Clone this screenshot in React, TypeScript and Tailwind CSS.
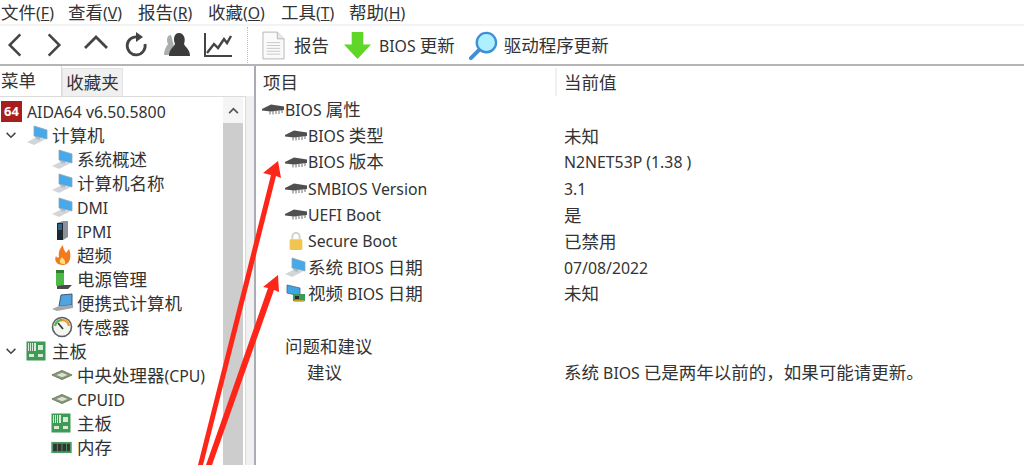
import type { ReactNode } from 'react';

// CJK glyphs run wider than the latin ones in the shot, so they get their own size.
// The wrapper's own font is the CJK one so latin-only rows keep the same baseline.
function T({ children }: { children: string }) {
  return (
    <span className="inline-block font-['Noto_Sans_CJK_SC',sans-serif] text-[17.5px]">
      {children.split(/([\u2E80-\uFFEF]+)/).map((part, i) =>
        i % 2 === 1 ? (
          <span key={i}>{part}</span>
        ) : part ? (
          <span key={i} className="font-['Noto_Sans',sans-serif] text-[15.8px] whitespace-pre">{part}</span>
        ) : null
      )}
    </span>
  );
}

function Chip() {
  return (
    <svg viewBox="0 0 22 14" className="w-[22px] h-[14px]">
      <path d="M0 7 L9 2.5 L22 4.5 L22 8 L9 9.5 L0 8.5 Z" fill="#4f4f4f" />
      <path d="M8 9 v3.5 M11 9 v3.5 M14 8.5 v3.5 M17 8.5 v3.5 M20 8 v3" stroke="#7d7d7d" strokeWidth="1.1" />
    </svg>
  );
}

function Monitor() {
  return (
    <svg viewBox="0 0 24 22" className="w-[24px] h-[22px]">
      <path d="M1 18 L11 13 L19 15.5 L8 21 Z" fill="#d3d6d8" />
      <path d="M9 12 L14 13.5 V16 L10 15 Z" fill="#b4bdc3" />
      <path d="M8 2 L21 6 V15 L8 12 Z" fill="#45a9ea" stroke="#8fa6b5" strokeWidth="0.8" />
    </svg>
  );
}

function Laptop() {
  return (
    <svg viewBox="0 0 24 22" className="w-[24px] h-[22px]">
      <path d="M10 3 L21 2 V13 L8 14 Z" fill="#4ea5e2" stroke="#3f5a70" strokeWidth="1" />
      <path d="M1 17 L8 14 L22 13 L22 16 L6 19 Z" fill="#a3a8ac" />
    </svg>
  );
}

function Server() {
  return (
    <svg viewBox="0 0 24 22" className="w-[24px] h-[22px]">
      <path d="M6 3 L12 1 H17 V17 L12 20 H6 Z" fill="#8b9299" />
      <path d="M6 3 H12 V20 H6 Z" fill="#1d2730" />
      <path d="M7 5 H11 M7 7 H11 M7 9 H11" stroke="#4aa0de" strokeWidth="1" />
    </svg>
  );
}

function Flame() {
  return (
    <svg viewBox="0 0 24 22" className="w-[24px] h-[22px]">
      <path d="M12 21 C5 21 3 16 5 12 C6 14 7 14 8 13 C7 8 9 4 12 1 C12 5 14 7 15 9 C16 8 17 6 18 5 C20 10 21 20 12 21 Z" fill="#f17a1c" />
      <path d="M12 20 C8 20 8 16 11 13 C12 15 15 16 14 20 Z" fill="#ffe27a" />
    </svg>
  );
}

function Power() {
  return (
    <svg viewBox="0 0 24 22" className="w-[24px] h-[22px]">
      <rect x="5" y="2" width="8" height="16" rx="1" fill="#4cb944" />
      <rect x="5" y="2" width="8" height="3" fill="#2f7d2b" />
      <path d="M13 17 H21 L17 21 H6 V18 Z" fill="#4a4a4a" />
    </svg>
  );
}

function Gauge() {
  return (
    <svg viewBox="0 0 24 22" className="w-[24px] h-[22px]">
      <circle cx="11" cy="11" r="9.5" fill="#f6f6f0" stroke="#5b6068" strokeWidth="1.6" />
      <path d="M4 10 A7 7 0 0 1 11 4" stroke="#58b84a" strokeWidth="2.4" fill="none" />
      <path d="M11 4 A7 7 0 0 1 18 10" stroke="#f09a2a" strokeWidth="2.4" fill="none" />
      <path d="M7 7 L12 13" stroke="#333" strokeWidth="1.6" />
    </svg>
  );
}

function Board() {
  return (
    <svg viewBox="0 0 20 20" className="w-[20px] h-[20px]">
      <rect x="0.5" y="0.5" width="19" height="19" fill="#3f9a55" />
      <rect x="2" y="2" width="8" height="8" fill="#d7ead9" />
      <path d="M3.5 2 v8 M5.5 2 v8 M7.5 2 v8" stroke="#3f9a55" strokeWidth="1" />
      <rect x="12" y="4" width="5" height="5" fill="#d7ead9" />
      <rect x="3" y="13" width="5" height="3" fill="#d7ead9" />
      <rect x="12" y="13" width="5" height="3" fill="#d7ead9" />
    </svg>
  );
}

function Cpu() {
  return (
    <svg viewBox="0 0 24 14" className="w-[22px] h-[14px]">
      <path d="M1 7 L12 2 L23 7 L12 12 Z" fill="#7f9a75" stroke="#77775f" strokeWidth="1" />
      <path d="M6 7 L12 4.5 L18 7 L12 9.5 Z" fill="#dfe2d2" />
    </svg>
  );
}

function Ram() {
  return (
    <svg viewBox="0 0 22 14" className="w-[21px] h-[13px]">
      <rect x="0" y="1" width="22" height="12" fill="#4c9a63" />
      <path d="M2 3 h4 v8 h-4 Z M7 3 h4 v8 h-4 Z M12 3 h4 v8 h-4 Z M17 3 h3 v8 h-3 Z" fill="#333" />
    </svg>
  );
}

function Lock() {
  return (
    <svg viewBox="0 0 16 22" className="w-[16px] h-[20px]">
      <path d="M4 9 V6 A4 4 0 0 1 12 6 V9" fill="none" stroke="#cfcfc4" strokeWidth="2" />
      <rect x="1" y="9" width="14" height="12" rx="1.5" fill="#f0c552" />
    </svg>
  );
}

function Video() {
  return (
    <svg viewBox="0 0 20 20" className="w-[20px] h-[20px]">
      <path d="M1 2 L14 5 V13 L1 10 Z" fill="#3fa6e6" stroke="#40687f" strokeWidth="0.8" />
      <rect x="7" y="11" width="12" height="7" fill="#3b9a58" />
      <rect x="9" y="13" width="4" height="3" fill="#2a2a2a" />
      <path d="M8 18 H18" stroke="#e0a526" strokeWidth="1.6" />
    </svg>
  );
}

function TreeRow({ icon, label, top }: { icon: ReactNode; label: string; top?: boolean }) {
  return (
    <div className={`flex items-center h-[24px] whitespace-nowrap ${top ? 'pl-[5px]' : 'pl-[51px]'}`}>
      {top && (
        <svg viewBox="0 0 12 8" className="w-[12px] h-[7px] mr-[9px]">
          <path d="M1 1 L6 6 L11 1" fill="none" stroke="#444" strokeWidth="1.7" />
        </svg>
      )}
      <span className="w-[26px] flex items-center shrink-0">{icon}</span>
      <T>{label}</T>
    </div>
  );
}

function PropRow({ icon, label, value, indent = 'pl-[28px]' }: { icon?: ReactNode; label?: string; value?: string; indent?: string }) {
  return (
    <div className="flex items-center h-[26.3px] whitespace-nowrap">
      <div className={`flex items-center w-[308px] shrink-0 ${indent}`}>
        {icon && <span className="w-[24px] flex justify-center items-center shrink-0">{icon}</span>}
        {label && <T>{label}</T>}
      </div>
      {value && <T>{value}</T>}
    </div>
  );
}

function Menu({ label, hot, width }: { label: string; hot: string; width: string }) {
  return (
    <span className={`${width} whitespace-nowrap`}>
      <T>{label}</T>(<span className="underline">{hot}</span>)
    </span>
  );
}

export default function App() {
  return (
    <div className="font-['Noto_Sans',sans-serif] relative w-[1024px] h-[465px] overflow-hidden bg-white text-[15.8px] leading-none text-[#333]">
      {/* menu */}
      <div className="flex h-[24px] items-center pl-[1px]">
        <Menu label="文件" hot="F" width="w-[67px]" />
        <Menu label="查看" hot="V" width="w-[70px]" />
        <Menu label="报告" hot="R" width="w-[70px]" />
        <Menu label="收藏" hot="O" width="w-[73px]" />
        <Menu label="工具" hot="T" width="w-[68px]" />
        <Menu label="帮助" hot="H" width="w-[60px]" />
      </div>

      {/* toolbar */}
      <div className="flex h-[42px] items-center border-t-2 border-t-[#f3f3f3] border-b-2 border-b-[#b5b5b5]">
        <div className="flex items-center w-[248px] border-r border-dotted border-[#bbb] h-[36px] pl-[7px]">
          <svg viewBox="0 0 18 28" className="w-[16px] h-[26px]"><path d="M15 2 L3 14 L15 26" fill="none" stroke="#444" strokeWidth="2.8" /></svg>
          <svg viewBox="0 0 18 28" className="w-[16px] h-[26px] ml-[23px]"><path d="M3 2 L15 14 L3 26" fill="none" stroke="#444" strokeWidth="2.8" /></svg>
          <svg viewBox="0 0 26 16" className="w-[26px] h-[16px] ml-[21px] mb-[6px]"><path d="M2 14 L13 3 L24 14" fill="none" stroke="#444" strokeWidth="2.8" /></svg>
          <svg viewBox="0 0 26 26" className="w-[26px] h-[26px] ml-[14px]">
            <path d="M15 5 A9 9 0 1 0 22 12" fill="none" stroke="#444" strokeWidth="2.8" />
            <path d="M13 0 L20 5 L13 10 Z" fill="#444" />
          </svg>
          <svg viewBox="0 0 28 26" className="w-[28px] h-[26px] ml-[14px]">
            <path d="M8 3 C4 3 3 8 5 12 C3 15 1 18 1 23 H9 L11 14 Z" fill="#a9aeae" />
            <path d="M16 1 C11 1 10 7 12 12 C11 15 6 17 6 24 H27 C27 17 22 15 21 12 C23 7 21 1 16 1 Z" fill="#3c3c3c" />
          </svg>
          <svg viewBox="0 0 30 28" className="w-[30px] h-[28px] ml-[12px]">
            <path d="M2 2 V25 H29" fill="none" stroke="#444" strokeWidth="2" />
            <path d="M4 22 L11 13 L15 17 L21 8 L24 12 L28 5" fill="none" stroke="#444" strokeWidth="2.4" />
          </svg>
        </div>
        <div className="flex items-center ml-[14px] gap-[9px]">
          <svg viewBox="0 0 24 30" className="w-[23px] h-[29px]">
            <path d="M1 1 H16 L23 8 V29 H1 Z" fill="#fafafa" stroke="#b5b5b5" />
            <path d="M16 1 V8 H23" fill="#e8e8e8" stroke="#b5b5b5" />
            <path d="M5 12 H19 M5 15 H19 M5 18 H19 M5 21 H19 M5 24 H19" stroke="#c8c8c8" />
          </svg>
          <T>报告</T>
        </div>
        <div className="flex items-center ml-[14px] gap-[7px]">
          <svg viewBox="0 0 30 30" className="w-[29px] h-[29px]">
            <path d="M9 1 H21 V14 H29 L15 29 L1 14 H9 Z" fill="#5fd628" />
          </svg>
          <T>BIOS 更新</T>
        </div>
        <div className="flex items-center ml-[14px] gap-[6px]">
          <svg viewBox="0 0 30 30" className="w-[29px] h-[29px]">
            <circle cx="18" cy="12" r="10" fill="#aef0ff" stroke="#3f8fd6" strokeWidth="2.4" />
            <path d="M10 20 L2 28" stroke="#3f8fd6" strokeWidth="4" strokeLinecap="round" />
          </svg>
          <T>驱动程序更新</T>
        </div>
      </div>

      <div className="flex h-[399px]">
        {/* left pane */}
        <div className="w-[246px] shrink-0 flex flex-col">
          <div className="flex h-[30px] items-end">
            <div className="w-[62px] h-[30px] flex items-center pl-[1px] pb-[3px] border-r border-[#d9d9d9]"><T>菜单</T></div>
            <div className="w-[61px] h-[28px] flex items-center justify-center pb-[2px] bg-[#f0f0f0] border border-[#e3e3e3] border-b-0"><T>收藏夹</T></div>
          </div>
          <div className="flex flex-1 border-t border-r border-[#dcdcdc]">
            <div className="flex-1 min-w-0">
              <div className="flex items-center h-[24px] pl-[1px] gap-[5px] mt-[2px]">
                <span className="w-[21px] h-[21px] bg-[#a81d1d] text-white font-bold text-[13px] flex items-center justify-center">64</span>
                <T>AIDA64 v6.50.5800</T>
              </div>
              <TreeRow top icon={<Monitor />} label="计算机" />
              <TreeRow icon={<Monitor />} label="系统概述" />
              <TreeRow icon={<Monitor />} label="计算机名称" />
              <TreeRow icon={<Monitor />} label="DMI" />
              <TreeRow icon={<Server />} label="IPMI" />
              <TreeRow icon={<Flame />} label="超频" />
              <TreeRow icon={<Power />} label="电源管理" />
              <TreeRow icon={<Laptop />} label="便携式计算机" />
              <TreeRow icon={<Gauge />} label="传感器" />
              <TreeRow top icon={<Board />} label="主板" />
              <TreeRow icon={<Cpu />} label="中央处理器(CPU)" />
              <TreeRow icon={<Cpu />} label="CPUID" />
              <TreeRow icon={<Board />} label="主板" />
              <TreeRow icon={<Ram />} label="内存" />
            </div>
            <div className="w-[20px] mr-[2px] shrink-0 flex flex-col">
              <div className="h-[26px] flex items-center justify-center bg-[#f5f5f5]">
                <svg viewBox="0 0 12 8" className="w-[11px] h-[7px]"><path d="M1 7 L6 2 L11 7" fill="none" stroke="#555" strokeWidth="2" /></svg>
              </div>
              <div className="flex-1 bg-[#cdcdcd]" />
            </div>
          </div>
        </div>

        {/* splitter */}
        <div className="w-[8px] shrink-0 mt-[30px] bg-[#f0f0f0]" />

        {/* right pane */}
        <div className="flex-1 border-l-2 border-[#a9adb3] pt-[2px]">
          <div className="flex h-[28px] items-center">
            <div className="w-[301px] pl-[7px] border-r-2 border-[#efefef] h-full flex items-center"><T>项目</T></div>
            <div className="pl-[7px]"><T>当前值</T></div>
          </div>
          <PropRow indent="pl-[5px]" icon={<Chip />} label="BIOS 属性" />
          <PropRow icon={<Chip />} label="BIOS 类型" value="未知" />
          <PropRow icon={<Chip />} label="BIOS 版本" value="N2NET53P (1.38 )" />
          <PropRow icon={<Chip />} label="SMBIOS Version" value="3.1" />
          <PropRow icon={<Chip />} label="UEFI Boot" value="是" />
          <PropRow icon={<Lock />} label="Secure Boot" value="已禁用" />
          <PropRow icon={<Monitor />} label="系统 BIOS 日期" value="07/08/2022" />
          <PropRow icon={<Video />} label="视频 BIOS 日期" value="未知" />
          <PropRow />
          <PropRow indent="pl-[29px]" label="问题和建议" />
          <PropRow indent="pl-[51px]" label="建议" value="系统 BIOS 已是两年以前的，如果可能请更新。" />
        </div>
      </div>

      {/* red annotation arrows */}
      <svg viewBox="0 0 1024 465" className="absolute inset-0 w-[1024px] h-[465px] pointer-events-none">
        <path d="M278 161 L281 178 L276 176 L203 465 L198 465 L271 175 L263 173 Z" fill="#fd2618" />
        <path d="M278 275 L279 292 L274 290 L212 465 L206 465 L268 288 L263 287 Z" fill="#fd2618" />
      </svg>
    </div>
  );
}
